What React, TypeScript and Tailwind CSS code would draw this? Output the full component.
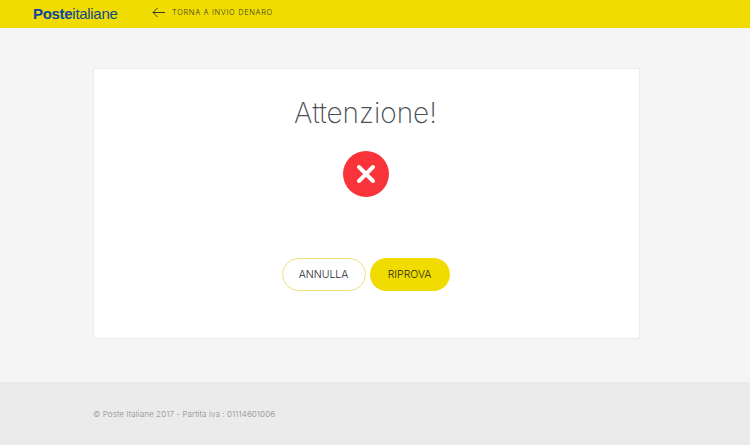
const font = { fontFamily: "Inter, 'Liberation Sans', sans-serif" };

function Header() {
  return (
    <header className="flex h-[28px] items-center bg-[#f0dc00] pl-[33px]">
      <div className="w-[119px] pb-[1px] font-['Liberation_Sans',sans-serif] text-[15px] leading-none tracking-[-0.3px] text-[#0f4a8a]">
        <span className="font-bold text-[#0b47a0]">Poste</span>
        <span>italiane</span>
      </div>
      <a className="flex items-center gap-[7px] pb-[3px] text-[#3a3a20]">
        <svg width="13" height="11" viewBox="0 0 13 11" fill="none" stroke="currentColor" strokeWidth="1">
          <path d="M13 5.5H1M5.5 1 1 5.5 5.5 10" />
        </svg>
        <span className="text-[7.5px] font-light tracking-[0.62px]">TORNA A INVIO DENARO</span>
      </a>
    </header>
  );
}

function ErrorCard() {
  return (
    <div className="mt-[40px] ml-[93px] flex h-[271px] w-[547px] flex-col items-center rounded-[2px] border border-[#ececec] bg-white pr-[2px]">
      <h1 className="mt-[27px] text-[28px] leading-[34px] font-extralight text-[#4a4f55]">Attenzione!</h1>
      <div className="mt-[21px] flex h-[46px] w-[46px] items-center justify-center rounded-full bg-[#f9333a]">
        <svg width="24" height="24" viewBox="0 0 24 24" fill="none" stroke="#fff" strokeWidth="4" strokeLinecap="round">
          <path d="M5 5 19 19M19 5 5 19" />
        </svg>
      </div>
      <div className="mt-[61px] flex gap-[4px]">
        <button className="h-[33px] w-[84px] rounded-full border border-[#eee080] bg-white text-[10.5px] font-light text-[#22262b]">ANNULLA</button>
        <button className="h-[33px] w-[80px] rounded-full bg-[#f0dc00] text-[10.5px] font-light text-[#2a2a10]">RIPROVA</button>
      </div>
    </div>
  );
}

export default function App() {
  return (
    <div style={font} className="flex h-[445px] w-[750px] flex-col overflow-hidden bg-[#f5f5f5]">
      <Header />
      <ErrorCard />
      <footer className="mt-auto flex h-[63px] items-center bg-[#ebebeb] pl-[93px] text-[8px] font-light tracking-[0.1px] text-[#8a8a8a]">
        © Poste Italiane 2017 - Partita iva : 01114601006
      </footer>
    </div>
  );
}
